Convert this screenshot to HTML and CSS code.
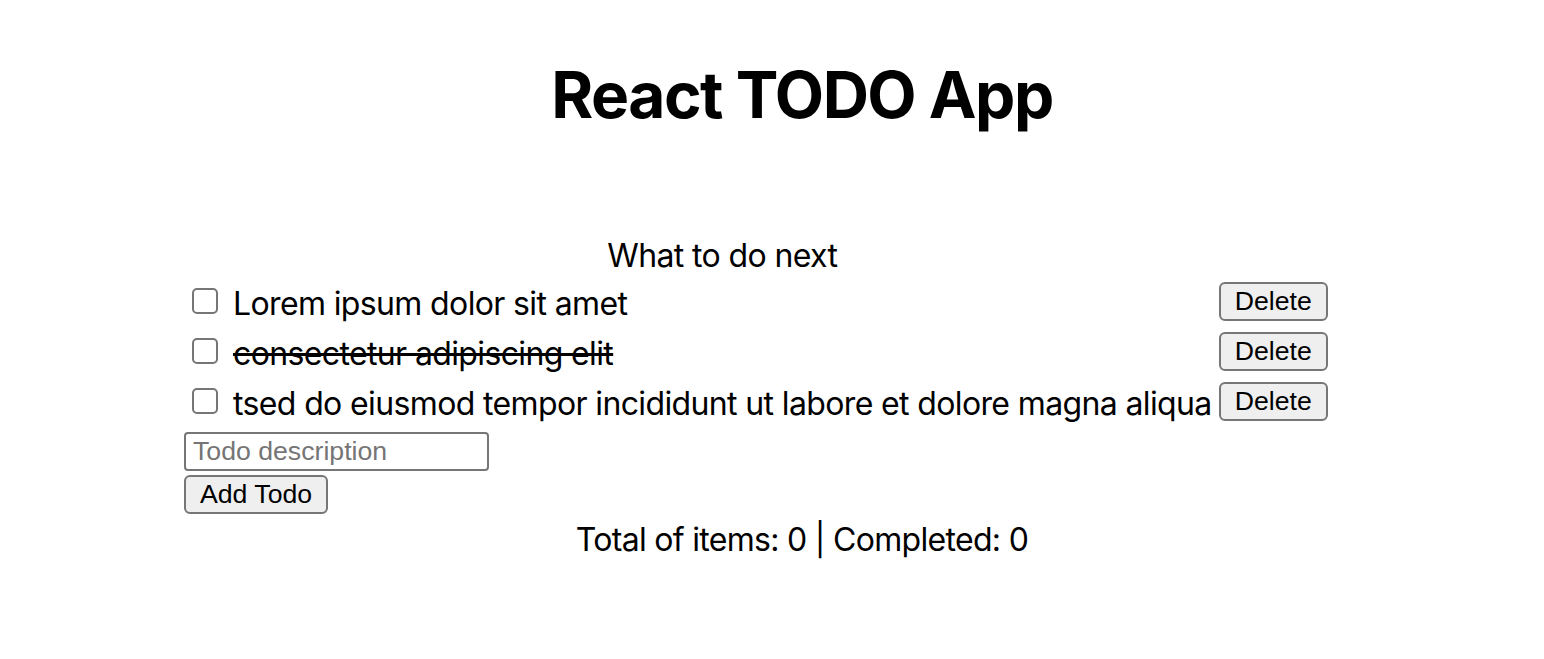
FILE: index.html
```
<html>

<head>
    <meta http-equiv="Content-Type" content="text/html; charset=UTF-8">
    <title>React TODO App</title>
    <link rel="stylesheet" href="styles.css">
</head>

<body>
    <div class="app">
        <h1 class="title">React TODO App</h1>

        <div class="board">
            <table class="todo-table">
                <thead>
                    <tr>
                        <th></th>
                        <th class="head">What to do next</th>
                        <th></th>
                    </tr>
                </thead>
                <tbody>
                    <tr>
                        <td class="check"><input type="checkbox"></td>
                        <td class="text">Lorem ipsum dolor sit amet</td>
                        <td class="action"><button class="btn">Delete</button></td>
                    </tr>
                    <tr>
                        <td class="check"><input type="checkbox"></td>
                        <td class="text done">consectetur adipiscing elit</td>
                        <td class="action"><button class="btn">Delete</button></td>
                    </tr>
                    <tr>
                        <td class="check"><input type="checkbox"></td>
                        <td class="text">tsed do eiusmod tempor incididunt ut labore et dolore magna aliqua</td>
                        <td class="action"><button class="btn">Delete</button></td>
                    </tr>
                </tbody>
            </table>

            <form class="add-form">
                <input class="field" type="text" placeholder="Todo description">
                <button class="btn" type="button">Add Todo</button>
            </form>
        </div>

        <p class="summary">Total of items: 0 | Completed: 0</p>
    </div>
</body>

</html>
```

FILE: styles.css
```
* {
    margin: 0;
    padding: 0;
    box-sizing: border-box;
}

body {
    font-family: Inter, "Noto Sans", sans-serif;
    color: #000;
    background: #fff;
}

.app {
    padding-left: 60px;
}

.title {
    font-size: 64px;
    font-weight: 700;
    letter-spacing: -1.5px;
    text-align: center;
    line-height: 78px;
    padding-top: 56px;
}

/* list */
.board {
    margin-left: 124px;
    margin-top: 98px;
}

.todo-table {
    border-collapse: collapse;
    font-size: 32px;
    letter-spacing: -0.63px;
}

.todo-table th {
    font-weight: 400;
    height: 44px;
    padding-top: 2px;
}

.todo-table td {
    height: 50px;
    vertical-align: middle;
}

.check {
    padding-left: 8px;
    padding-right: 11px;
}

.check input {
    appearance: none;
    display: block;
    width: 26px;
    height: 26px;
    border: 2px solid #767676;
    border-radius: 5px;
    background: #fff;
}

.text {
    padding: 4px 4px 0;
    white-space: nowrap;
}

.action {
    padding-left: 3px;
}

.done {
    text-decoration: line-through;
}

.btn {
    font-family: "Liberation Sans", Arial, sans-serif;
    font-size: 26.67px;
    letter-spacing: 0;
    color: #000;
    background: #efefef;
    border: 2px solid #767676;
    border-radius: 6px;
    padding: 2px 14px;
    line-height: 31px;
}

/* add form */
.add-form {
    display: flex;
    flex-direction: column;
    align-items: flex-start;
    gap: 4px;
    margin-top: 6px;
}

.field {
    width: 305px;
    height: 39px;
    font-family: "Liberation Sans", Arial, sans-serif;
    font-size: 26.67px;
    border: 2px solid #767676;
    border-radius: 4px;
    padding: 2px 7px;
}

.field::placeholder {
    color: #757575;
}

.summary {
    font-size: 32px;
    letter-spacing: -0.7px;
    text-align: center;
    margin-top: 6px;
}
```
